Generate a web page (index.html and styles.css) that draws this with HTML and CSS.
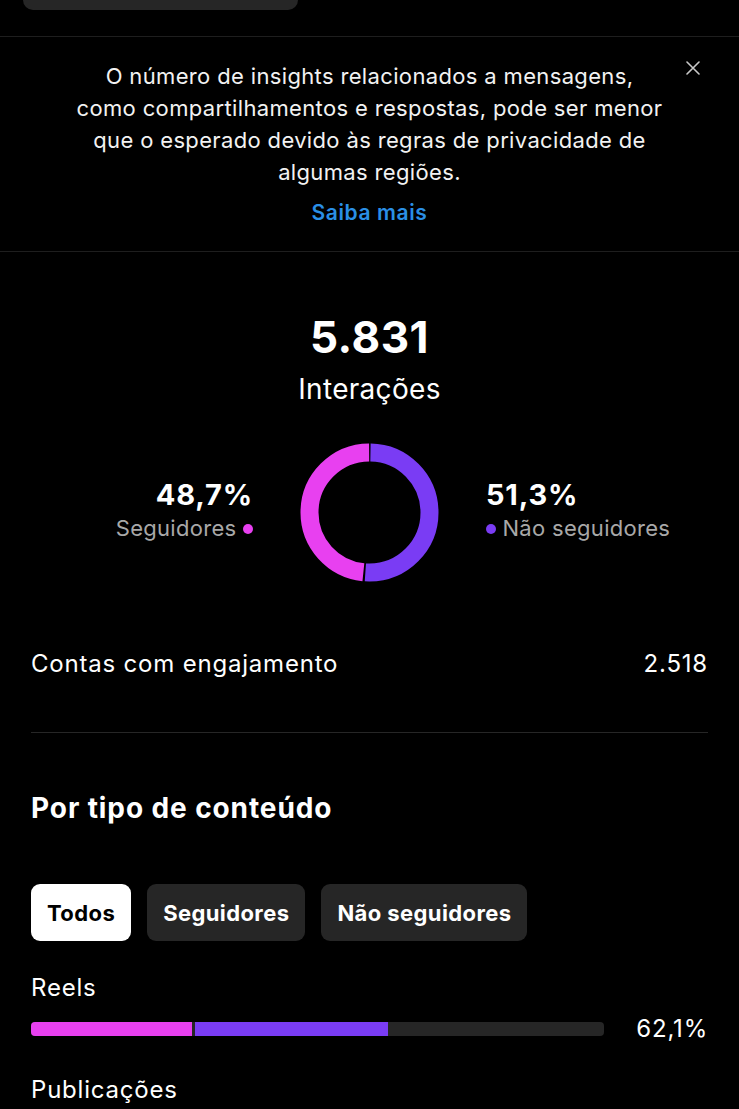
FILE: index.html
```html
<!DOCTYPE html>
<html lang="pt-BR">
<head>
  <meta charset="UTF-8">
  <meta name="viewport" content="width=device-width, initial-scale=1.0">
  <title>Interações</title>
  <link rel="stylesheet" href="styles.css">
</head>
<body>
  <div class="top-tab"></div>
  <div class="divider full"></div>

  <div class="notice">
    <p class="notice-text">
      O número de insights relacionados a mensagens,<br>
      como compartilhamentos e respostas, pode ser menor<br>
      que o esperado devido às regras de privacidade de<br>
      algumas regiões.
    </p>
    <a class="notice-link" href="#">Saiba mais</a>
    <button class="notice-close" aria-label="Fechar">
      <svg width="14" height="14" viewBox="0 0 14 14">
        <path d="M1 1 L13 13 M13 1 L1 13" stroke="#c8c8c8" stroke-width="1.6" stroke-linecap="round"/>
      </svg>
    </button>
  </div>
  <div class="divider full"></div>

  <div class="summary">
    <div class="total">5.831</div>
    <div class="total-label">Interações</div>

    <div class="split">
      <div class="split-side left">
        <div class="split-pct">48,7%</div>
        <div class="split-name">Seguidores <span class="dot pink"></span></div>
      </div>

      <svg class="donut" width="139" height="139" viewBox="0 0 139 139">
        <g transform="rotate(-90 69.5 69.5)">
          <circle cx="69.5" cy="69.5" r="60" fill="none" stroke="#7a3cf4" stroke-width="18"
                  stroke-dasharray="191.4 400" stroke-dashoffset="-1"/>
          <circle cx="69.5" cy="69.5" r="60" fill="none" stroke="#e840f0" stroke-width="18"
                  stroke-dasharray="181.6 400" stroke-dashoffset="-194.4"/>
        </g>
      </svg>

      <div class="split-side right">
        <div class="split-pct">51,3%</div>
        <div class="split-name"><span class="dot purple"></span> Não seguidores</div>
      </div>
    </div>
  </div>

  <div class="row">
    <span>Contas com engajamento</span>
    <span>2.518</span>
  </div>
  <div class="divider inset"></div>

  <h2 class="section-title">Por tipo de conteúdo</h2>

  <div class="chips">
    <button class="chip active">Todos</button>
    <button class="chip">Seguidores</button>
    <button class="chip">Não seguidores</button>
  </div>

  <div class="type">
    <div class="type-name">Reels</div>
    <div class="type-bar-row">
      <div class="bar">
        <div class="bar-seg pink" style="width: 28.1%"></div>
        <div class="bar-seg purple" style="width: 33.6%"></div>
      </div>
      <span class="type-pct">62,1%</span>
    </div>
  </div>

  <div class="type">
    <div class="type-name">Publicações</div>
  </div>
</body>
</html>
```

FILE: styles.css
```css
body {
  margin: 0;
  background: #000;
  color: #fff;
  font-family: Inter, "Noto Sans", sans-serif;
  width: 739px;
  height: 1109px;
  overflow: hidden;
}

.top-tab {
  margin-left: 23px;
  width: 275px;
  height: 10px;
  background: #262626;
  border-radius: 0 0 12px 12px;
}

.divider {
  height: 1px;
  background: #1e1e1e;
}

.divider.full {
  margin-top: 26px;
}

.divider.inset {
  margin: 52px 31px 0;
  background: #262626;
}

/* message insights notice */
.notice {
  position: relative;
  padding: 23px 0 22px;
  text-align: center;
}

.notice + .divider.full {
  margin-top: 0;
}

.notice-text {
  margin: 0;
  font-size: 22px;
  line-height: 32px;
  letter-spacing: 0.35px;
  color: #f2f2f2;
}

.notice-link {
  display: inline-block;
  margin-top: 9px;
  font-size: 21px;
  line-height: 32px;
  letter-spacing: 0.6px;
  font-weight: 600;
  color: #2a8fe6;
  text-decoration: none;
}

.notice-close {
  position: absolute;
  top: 24px;
  right: 39px;
  padding: 0;
  border: none;
  background: none;
  line-height: 0;
}

/* total + donut */
.summary {
  padding-top: 61px;
  text-align: center;
}

.total {
  font-size: 44px;
  line-height: 48px;
  font-weight: 700;
  letter-spacing: 0.5px;
}

.total-label {
  margin-top: 10px;
  font-size: 28px;
  line-height: 36px;
  letter-spacing: 0.3px;
}

.split {
  margin-top: 36px;
  display: flex;
  align-items: center;
  justify-content: center;
  gap: 47px;
}

.split-side {
  flex: 1;
  padding-bottom: 3px;
}

.split-side.left {
  text-align: right;
}

.split-side.right {
  text-align: left;
}

.split-pct {
  font-size: 29px;
  line-height: 34px;
  font-weight: 700;
  letter-spacing: 0.8px;
}

.split-name {
  font-size: 22px;
  line-height: 32px;
  letter-spacing: 0.3px;
  color: #a8a8a8;
}

.dot {
  display: inline-block;
  width: 10px;
  height: 10px;
  border-radius: 50%;
  vertical-align: 2px;
}

.pink {
  background: #e840f0;
}

.purple {
  background: #7a3cf4;
}

/* list rows */
.row {
  margin-top: 66px;
  padding: 0 31px;
  display: flex;
  justify-content: space-between;
  font-size: 24px;
  line-height: 32px;
  letter-spacing: 0.8px;
}

.section-title {
  margin: 57px 31px 0;
  font-size: 28px;
  line-height: 36px;
  font-weight: 700;
  letter-spacing: 0.9px;
}

.chips {
  margin: 58px 31px 0;
  display: flex;
  gap: 16px;
}

.chip {
  height: 57px;
  padding: 0 16px;
  border: none;
  border-radius: 9px;
  background: #262626;
  color: #fff;
  font-family: inherit;
  font-size: 22px;
  font-weight: 700;
  letter-spacing: 0.4px;
}

.chip.active {
  background: #fff;
  color: #000;
}

.type {
  padding: 0 31px;
}

.chips + .type {
  margin-top: 31px;
}

.type + .type {
  margin-top: 29px;
}

.type-name {
  font-size: 24px;
  line-height: 32px;
  letter-spacing: 0.8px;
}

.type-bar-row {
  margin-top: 9px;
  display: flex;
  align-items: center;
  justify-content: space-between;
}

.bar {
  width: 573px;
  height: 14px;
  display: flex;
  gap: 3px;
  background: #262626;
  border-radius: 4px;
  overflow: hidden;
}

.bar-seg {
  height: 100%;
}

.type-pct {
  font-size: 24px;
  line-height: 32px;
  letter-spacing: 0.8px;
}
```
